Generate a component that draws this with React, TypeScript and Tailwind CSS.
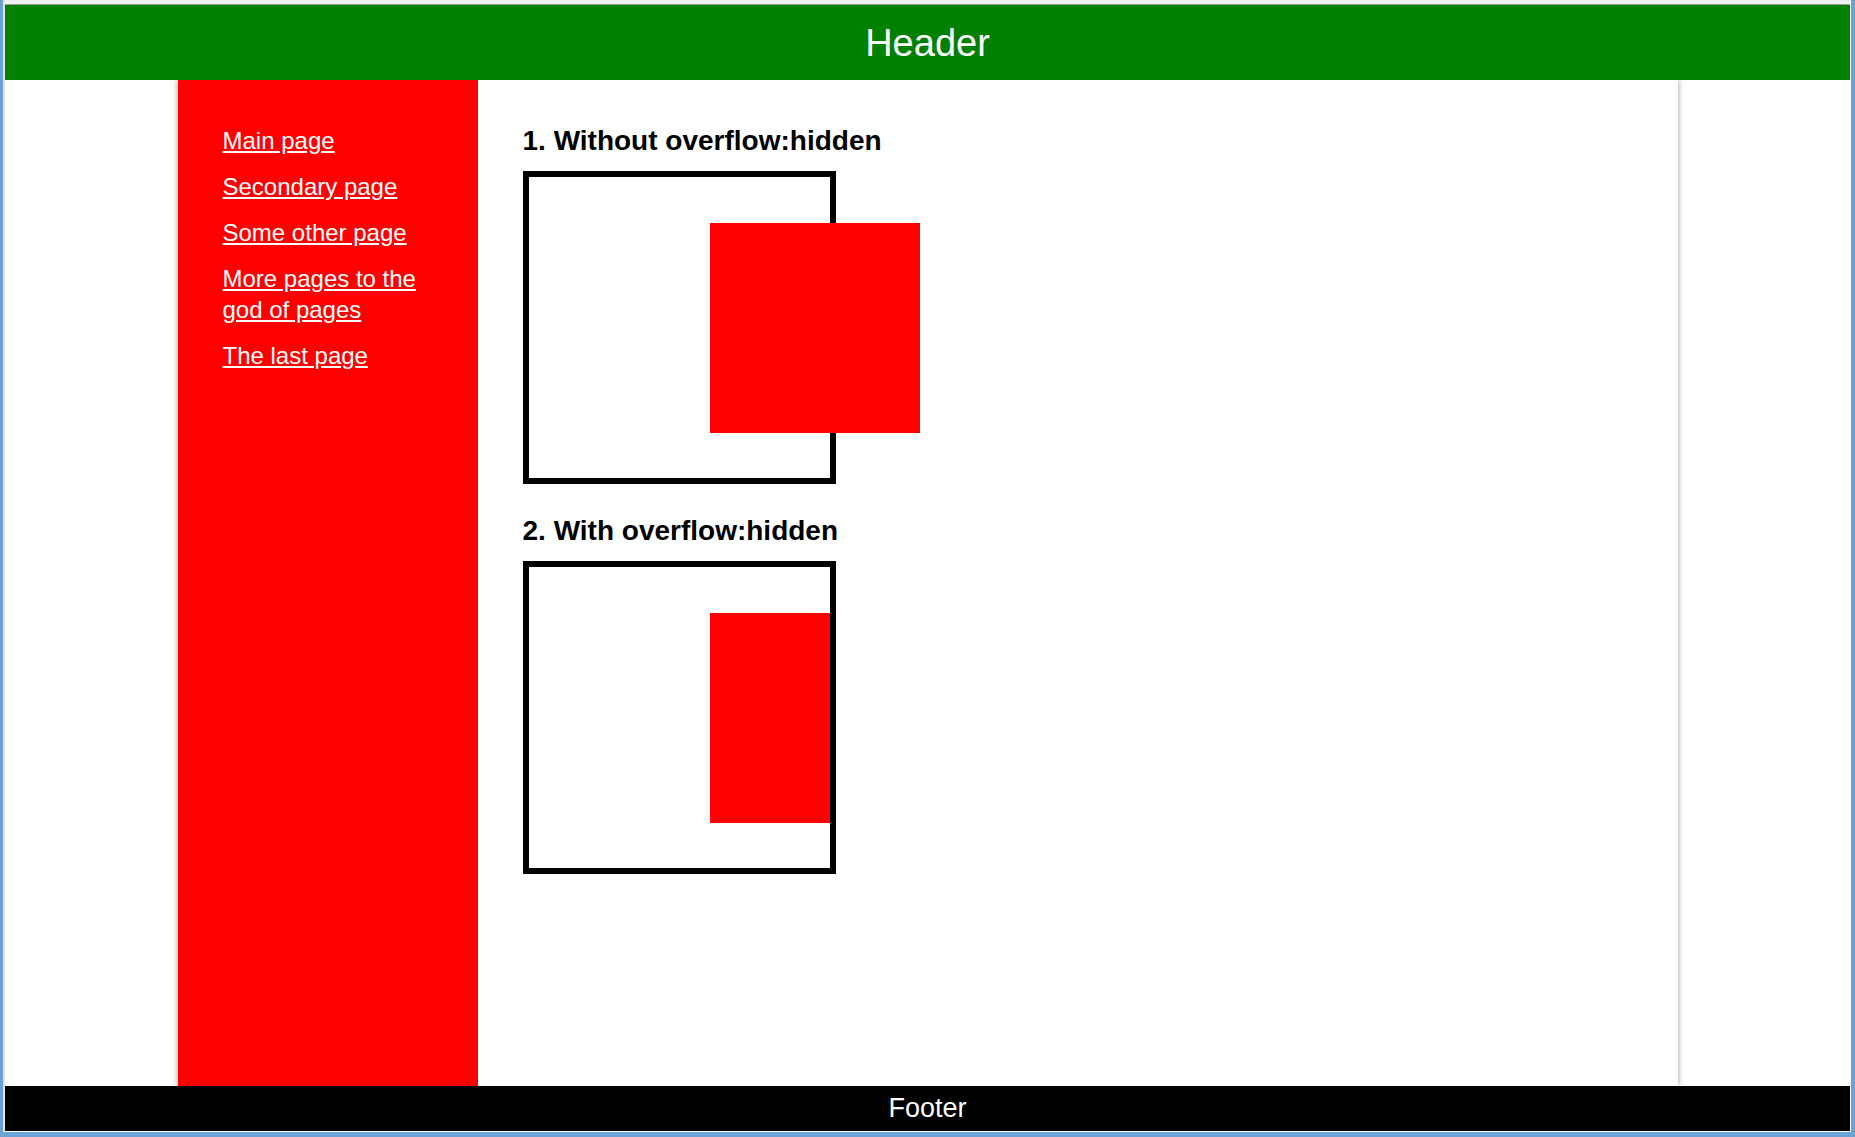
import React from "react";

const links = [
  "Main page",
  "Secondary page",
  "Some other page",
  "More pages to the god of pages",
  "The last page",
];

export default function App() {
  return (
    <div
      className="w-[1855px] h-[1137px] bg-[#6ba4d4] pl-[3px] pr-[4px] pb-[5px] overflow-hidden"
      style={{ fontFamily: '"Liberation Sans", Arial, sans-serif' }}
    >
      <div className="h-full flex flex-col bg-white border-l-2 border-r border-b border-l-[#e4e4e4] border-r-white border-b-white">
        <div className="h-[4px] bg-[#f0f0f0] shrink-0" />
        <div className="h-px bg-[#a0a0a0] shrink-0" />
        <header className="relative z-10 h-[75px] shrink-0 bg-[#008000] flex items-center justify-center">
          <span className="text-white text-[38px] leading-[44px]">Header</span>
        </header>
        <div className="flex-1 flex justify-center min-h-0">
          <div className="w-[1500px] flex bg-white shadow-[0_0_6px_rgba(0,0,0,0.4)]">
            <nav className="w-[300px] shrink-0 bg-[#ff0000] pt-[45px] pl-[45px] pr-[43px]">
              <ul className="flex flex-col gap-[15px]">
                {links.map((l) => (
                  <li key={l} className="text-[24px] leading-[31px]">
                    <a href="#" className="text-white underline">
                      {l}
                    </a>
                  </li>
                ))}
              </ul>
            </nav>
            <main className="flex-1 pt-[45px] pl-[45px]">
              <h3 className="text-[28px] leading-[32px] font-bold text-black">
                1. Without overflow:hidden
              </h3>
              <div className="relative mt-[14px] w-[313px] h-[313px] border-[6px] border-black">
                <div className="absolute left-[181px] top-[46px] w-[210px] h-[210px] bg-[#ff0000]" />
              </div>
              <h3 className="mt-[31px] text-[28px] leading-[32px] font-bold text-black">
                2. With overflow:hidden
              </h3>
              <div className="relative mt-[14px] w-[313px] h-[313px] border-[6px] border-black overflow-hidden">
                <div className="absolute left-[181px] top-[46px] w-[210px] h-[210px] bg-[#ff0000]" />
              </div>
            </main>
          </div>
        </div>
        <footer className="relative z-10 h-[45px] shrink-0 bg-black flex items-center justify-center">
          <span className="text-white text-[27px] leading-[31px]">Footer</span>
        </footer>
      </div>
    </div>
  );
}
